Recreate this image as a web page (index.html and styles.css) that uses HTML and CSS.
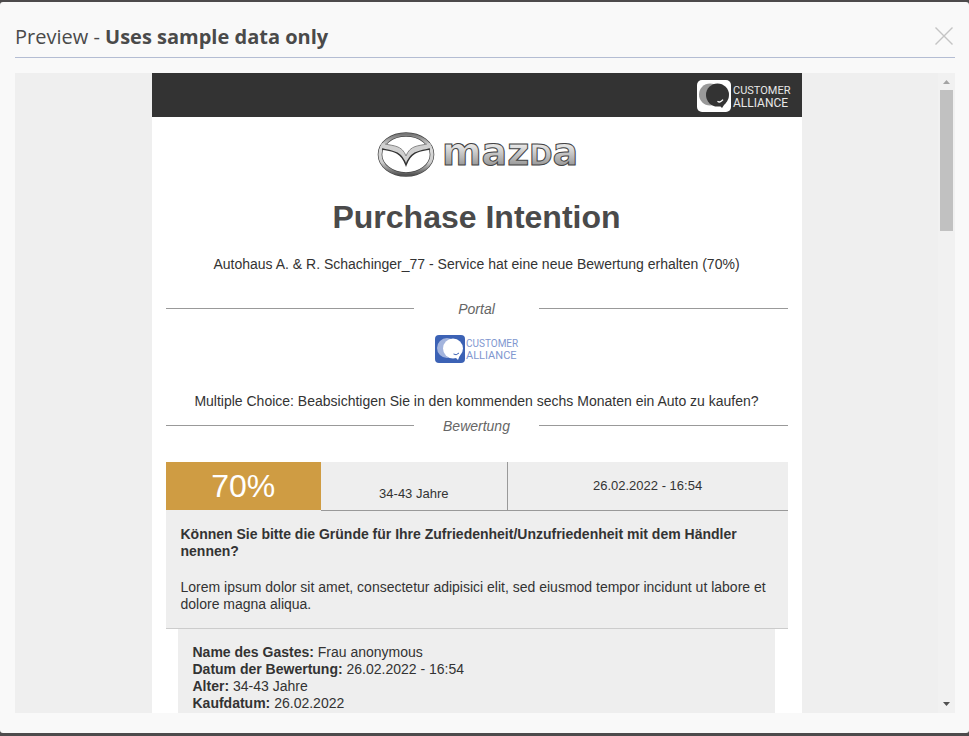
FILE: index.html
```html
<!DOCTYPE html>
<html lang="de">

<head>
    <meta charset="UTF-8">
    <meta name="viewport" content="width=device-width, initial-scale=1.0">
    <title>Preview</title>
    <link rel="stylesheet" href="styles.css">
</head>

<body>
    <div class="modal">
        <header class="modal-header">
            <h2>Preview - <strong>Uses sample data only</strong></h2>
            <button class="close" type="button" aria-label="Close">
                <svg width="20" height="20" viewBox="0 0 20 20">
                    <path d="M1.500 0.500L18.500 17.500M18.500 0.500L1.500 17.500" stroke="#c4c4c4" stroke-width="1.400" />
                </svg>
            </button>
        </header>

        <div class="frame">
            <div class="page">
                <div class="mail">
                    <div class="topbar">
                        <svg class="ca-logo" width="98" height="34" viewBox="0 0 98 34">
                            <rect x="0" y="2" width="34" height="32" rx="5" fill="#fff" />
                            <circle cx="13" cy="16.500" r="11" fill="#999" />
                            <circle cx="20.500" cy="17" r="11.500" fill="#333" />
                            <path d="M22 27L29 24L25 30Z" fill="#333" />
                            <path d="M20.500 23.200Q23 25.400 26 21.700" stroke="#fff" stroke-width="1.300" fill="none" />
                            <text x="36" y="16">CUSTOMER</text>
                            <text class="large" x="36" y="29">ALLIANCE</text>
                        </svg>
                    </div>

                    <div class="content">
                        <svg class="mazda" width="200" height="48" viewBox="0 0 200 48">
                            <defs>
                                <linearGradient id="chrome" x1="0" y1="0" x2="0" y2="1">
                                    <stop offset="0" stop-color="#777" />
                                    <stop offset="0.3" stop-color="#ddd" />
                                    <stop offset="0.7" stop-color="#ccc" />
                                    <stop offset="1" stop-color="#555" />
                                </linearGradient>
                                <linearGradient id="silver" x1="0" y1="0" x2="0" y2="1">
                                    <stop offset="0.3" stop-color="#eee" />
                                    <stop offset="0.8" stop-color="#999" />
                                </linearGradient>
                            </defs>
                            <ellipse cx="29" cy="23.500" rx="26" ry="20" fill="none" stroke="#444" stroke-width="4.600" />
                            <ellipse cx="29" cy="23.500" rx="26" ry="20" fill="none" stroke="url(#chrome)" stroke-width="3.200" />
                            <path d="M5 12C14 15 25 14 29 25C33 14 44 15 53 12L55 17C44 20 34 20 29 34C24 20 14 20 3 17Z" fill="#d0d0d0" />
                            <path d="M8 13C16 15 25 14 29 25C33 14 42 15 50 13" stroke="#888" stroke-width="1" fill="none" />
                            <path d="M5 18C15 20 24 20 29 34C34 20 43 20 53 18" stroke="#333" stroke-width="1.400" fill="none" />
                            <text x="65" y="34">maz<tspan class="small">D</tspan>a</text>
                        </svg>

                        <h1>Purchase Intention</h1>
                        <p class="intro">Autohaus A. &amp; R. Schachinger_77 - Service hat eine neue Bewertung erhalten (70%)</p>

                        <div class="divider"><em>Portal</em></div>
                        <svg class="ca-logo portal" width="84" height="30" viewBox="0 0 84 30">
                            <rect x="0" y="1" width="30" height="28" rx="4" fill="#3c62b5" />
                            <circle cx="12" cy="14" r="10" fill="#a3b4dd" />
                            <circle cx="18" cy="14.500" r="10" fill="#fff" />
                            <path d="M20 23L25 21L23 26Z" fill="#fff" />
                            <path d="M18.500 20Q21 22 24 19" stroke="#3c62b5" stroke-width="1" fill="none" />
                            <text x="31" y="13">CUSTOMER</text>
                            <text class="large" x="31" y="25">ALLIANCE</text>
                        </svg>
                        <p class="question">Multiple Choice: Beabsichtigen Sie in den kommenden sechs Monaten ein Auto zu kaufen?</p>
                        <div class="divider"><em>Bewertung</em></div>

                        <div class="summary">
                            <div class="score">70%</div>
                            <div class="age">34-43 Jahre</div>
                            <div class="date">26.02.2022 - 16:54</div>
                        </div>
                        <div class="review">
                            <p><strong>Können Sie bitte die Gründe für Ihre Zufriedenheit/Unzufriedenheit mit dem Händler nennen?</strong></p>
                            <p>Lorem ipsum dolor sit amet, consectetur adipisici elit, sed eiusmod tempor incidunt ut labore et dolore magna aliqua.</p>
                        </div>
                        <div class="details">
                            <p><strong>Name des Gastes:</strong> Frau anonymous</p>
                            <p><strong>Datum der Bewertung:</strong> 26.02.2022 - 16:54</p>
                            <p><strong>Alter:</strong> 34-43 Jahre</p>
                            <p><strong>Kaufdatum:</strong> 26.02.2022</p>
                        </div>
                    </div>
                </div>
            </div>

            <div class="scrollbar">
                <svg width="17" height="17" viewBox="0 0 17 17"><path d="M5 11L8.500 7L12 11Z" fill="#a3a3a3" /></svg>
                <div class="thumb"></div>
                <svg class="down" width="17" height="17" viewBox="0 0 17 17"><path d="M5 6L8.500 10L12 6Z" fill="#505050" /></svg>
            </div>
        </div>
    </div>
</body>

</html>
```
FILE: styles.css
```css
* {
    box-sizing: border-box;
}

body {
    display: flex;
    height: 100vh;
    margin: 0;
    padding: 2px 0 3px;
    background-color: #4d4b4c;
    color: #333;
    font-family: "Liberation Sans", Arial, sans-serif;
    font-size: 14px;
    line-height: 17px;
}

h1, h2, p {
    margin: 0;
}

.modal {
    display: flex;
    flex-direction: column;
    flex: 1;
    min-width: 0;
    padding: 15px 14px 20px 15px;
    background-color: #f9f9f9;
    border-radius: 3px;
}

.modal-header {
    display: flex;
    justify-content: space-between;
    align-items: center;
    height: 41px;
    margin-bottom: 15px;
    border-bottom: 1px solid #b4bdd3;
}

.modal-header h2 {
    color: #4a4a4a;
    font: 400 20px/28px "Open Sans", sans-serif;
}

.modal-header strong {
    font-weight: 700;
}

.close {
    display: flex;
    padding: 0 1px;
    border: 0;
    background: none;
    cursor: pointer;
}

.frame {
    display: flex;
    flex: 1;
    min-height: 0;
    background-color: #efefef;
}

.page {
    display: flex;
    justify-content: center;
    align-items: flex-start;
    flex: 1;
    overflow: hidden;
}

.mail {
    width: 100%;
    max-width: 650px;
    background-color: #fff;
}

.topbar {
    display: flex;
    justify-content: flex-end;
    align-items: center;
    height: 44px;
    padding: 0 7px;
    background-color: #333;
}

.ca-logo {
    fill: #e8e8e8;
    font-family: Roboto, sans-serif;
    font-size: 11px;
}

.ca-logo .large {
    font-size: 12px;
}

.portal {
    fill: #7f97cf;
    font-size: 10px;
    margin: 16px 0 29px;
}

.portal .large {
    font-size: 11px;
}

.content {
    display: flex;
    flex-direction: column;
    align-items: center;
    padding: 14px 14px 0;
}

.mazda text {
    fill: url(#silver);
    stroke: #444;
    stroke-width: 1px;
    font: 700 38px "DejaVu Sans", sans-serif;
}

.mazda .small {
    font-size: 28px;
}

h1 {
    margin: 18px 0 19px;
    color: #4a4a4a;
    font-size: 32px;
    line-height: 40px;
}

.intro {
    margin-bottom: 28px;
}

.divider {
    display: grid;
    grid-template-columns: 2fr 1fr 2fr;
    width: 100%;
    color: #666;
    text-align: center;
}

.divider::before,
.divider::after {
    content: "";
    height: 1px;
    margin-top: 7px;
    background-color: #999;
}

.question {
    margin-bottom: 8px;
}

.summary {
    display: grid;
    grid-template-columns: 5fr 6fr 9fr;
    width: 100%;
    height: 49px;
    margin-top: 27px;
    background-color: #eee;
    font-size: 13px;
    text-align: center;
}

.score {
    margin-bottom: 1px;
    background-color: #cf9c43;
    color: #fff;
    font-size: 32px;
    line-height: 48px;
}

.age {
    padding-top: 23px;
    border-right: 1px solid #999;
    border-bottom: 1px solid #999;
}

.date {
    padding-top: 15px;
    border-bottom: 1px solid #999;
}

.review {
    width: 100%;
    padding: 15px;
    background-color: #eee;
    border-bottom: 1px solid #ccc;
}

.review p + p {
    margin-top: 19px;
}

.details {
    align-self: flex-start;
    width: 96%;
    margin-left: 12px;
    padding: 15px 15px 30px;
    background-color: #eee;
}

.scrollbar {
    display: flex;
    flex-direction: column;
    align-items: center;
    width: 17px;
    background-color: #f1f1f1;
}

.thumb {
    width: 13px;
    height: 22%;
    background-color: #c1c1c1;
}

.down {
    margin-top: auto;
}
```
